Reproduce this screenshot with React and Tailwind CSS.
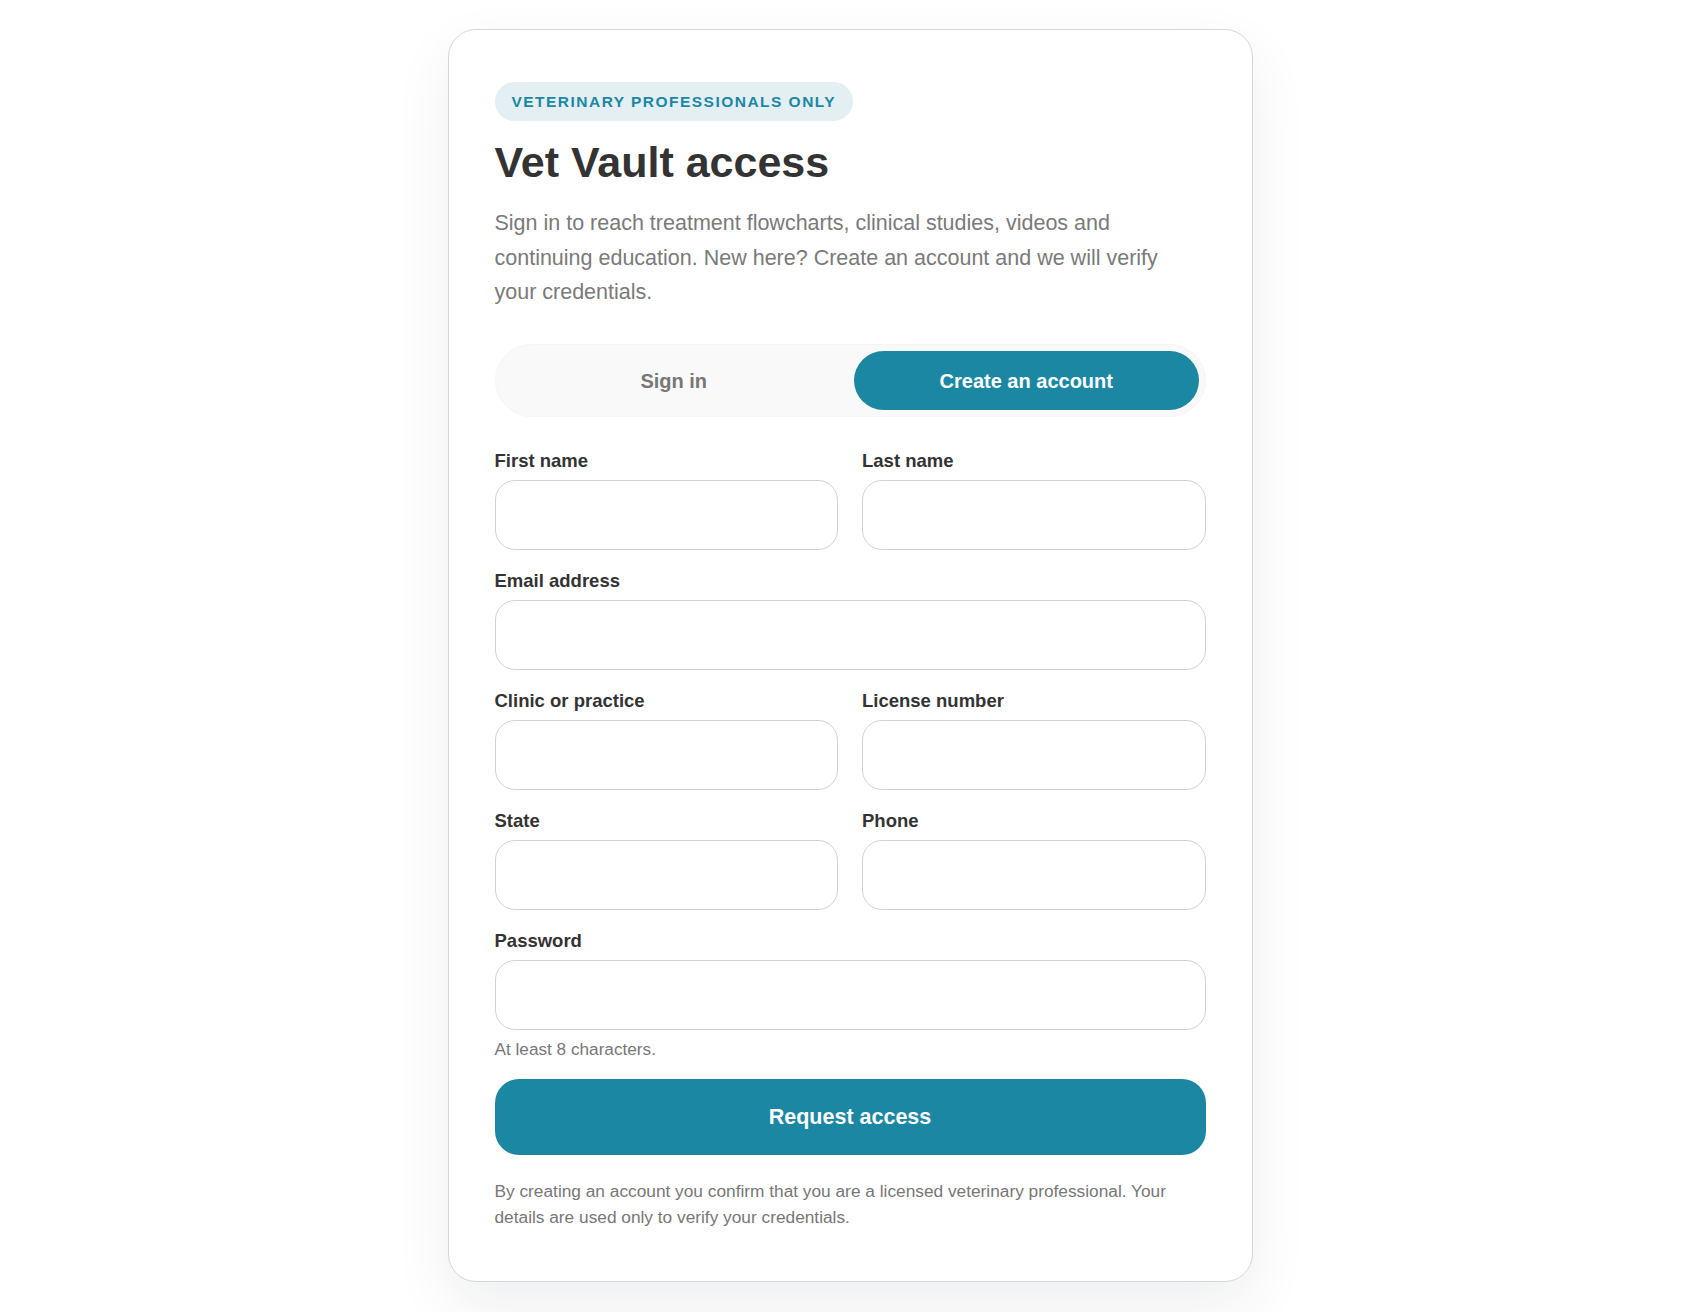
const Field = ({ label, type = "text" }) => (
  <label className="flex flex-col">
    <span className="mb-[6px] text-[18.5px] leading-[26px] font-bold text-[#333333]">{label}</span>
    <input
      type={type}
      className="h-[70px] w-full rounded-[20px] border-[1.5px] border-[#d2d2d2] bg-white px-5 text-[18px] text-[#333] outline-none"
    />
  </label>
);

const App = () => {
  return (
    <div
      className="min-h-screen bg-white pt-[29px] pb-10"
      style={{ fontFamily: '"Liberation Sans", Arial, sans-serif' }}
    >
      <div className="mx-auto w-[805px] rounded-[28px] border-[1.5px] border-[#d6d6d6] bg-white px-[46px] pt-[52px] pb-[51px] shadow-[0_24px_60px_rgba(15,23,42,0.07)]">
        {/* Badge */}
        <span className="inline-flex h-[39px] items-center rounded-full bg-[#e3eff3] px-[17px] text-[15.5px] font-bold uppercase tracking-[0.095em] text-[#1b87a3]">
          Veterinary professionals only
        </span>

        <h1 className="mt-[14px] text-[43px] leading-[1.3] font-bold text-[#333333]">
          Vet Vault access
        </h1>

        <p className="mt-[15px] text-[21.5px] leading-[34.75px] text-[#7a7a7a]">
          Sign in to reach treatment flowcharts, clinical studies, videos and continuing
          education. New here? Create an account and we will verify your credentials.
        </p>

        {/* Tabs */}
        <div className="mt-[34px] grid h-[73px] grid-cols-2 gap-[8px] rounded-full border border-[#f5f5f5] bg-[#f9f9f9] p-[6px]">
          <button className="rounded-full text-[20px] font-bold text-[#777777]">Sign in</button>
          <button className="rounded-full bg-[#1b87a3] text-[20px] font-bold text-white">
            Create an account
          </button>
        </div>

        {/* Form */}
        <form className="mt-[31px] grid grid-cols-2 gap-x-[24px] gap-y-[18px]">
          <Field label="First name" />
          <Field label="Last name" />
          <div className="col-span-2">
            <Field label="Email address" type="email" />
          </div>
          <Field label="Clinic or practice" />
          <Field label="License number" />
          <Field label="State" />
          <Field label="Phone" type="tel" />
          <div className="col-span-2">
            <Field label="Password" type="password" />
            <p className="mt-[6px] text-[17.2px] leading-[26px] text-[#777777]">At least 8 characters.</p>
          </div>
        </form>

        <button className="mt-[17px] h-[76px] w-full rounded-[24px] bg-[#1b87a3] text-[21.5px] font-bold text-white">
          Request access
        </button>

        <p className="mt-[23px] text-[17.3px] leading-[26px] text-[#777777]">
          By creating an account you confirm that you are a licensed veterinary professional. Your
          details are used only to verify your credentials.
        </p>
      </div>
    </div>
  );
};

export default App;
